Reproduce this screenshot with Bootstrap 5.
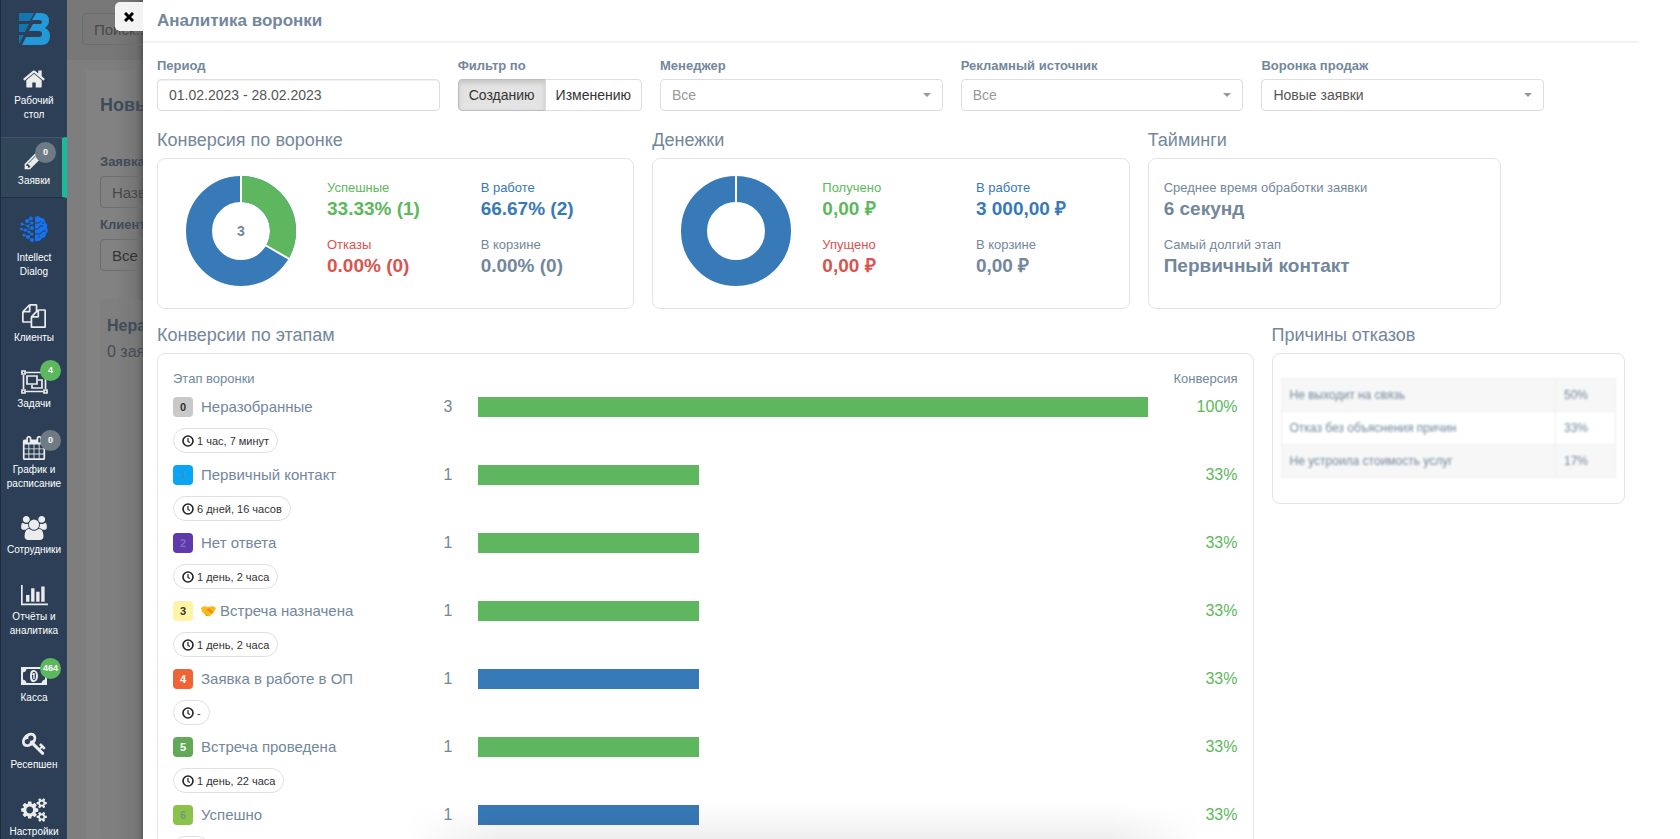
<!DOCTYPE html>
<html lang="ru">
<head>
<meta charset="utf-8">
<meta name="viewport" content="width=device-width, initial-scale=1">
<title>Аналитика воронки</title>
<link href="https://cdn.jsdelivr.net/npm/bootstrap@5.3.0/dist/css/bootstrap.min.css" rel="stylesheet">
<style>
:root{--ink:#73879c;--ok:#5cb85c;--work:#3879b7;--bad:#d9534f;--line:#e4e4e4}
body{font-family:"Liberation Sans",Arial,sans-serif;font-size:13px;line-height:18px;color:var(--ink);background:#fff}
.c-ok{color:var(--ok)}.c-work{color:var(--work)}.c-bad{color:var(--bad)}
/* sidebar */
.side{width:67px;background:#2c3f56;border-left:1px solid #1e2c3d;padding-top:57px}
.side-logo{left:16px;top:12px}
.side-item{display:block;color:#fff;text-decoration:none;text-align:center;font-size:10px;line-height:14px;padding:10px 0;margin-bottom:5px}
.side-item:nth-child(n+8){margin-bottom:6px}
.side-item .ico{height:24px;margin-bottom:3px;display:flex;align-items:center;justify-content:center}
.side-item .ico-tall{height:35px;padding-bottom:4px}
.side-item svg{fill:#ececec}
.side-item.current{background:#32465a;border-right:5px solid #1abb9c;border-top:1px solid #42566c;border-bottom:1px solid #213040;padding:9px 0}
.side-item.current .ico,.side-item.current .lbl{margin-right:-5px}
.count{position:absolute;left:39px;top:0;width:21px;height:21px;border-radius:50%;background:#707a84;color:#fff;font-size:9px;font-weight:bold;line-height:21px}
.count.on{background:var(--ok)}
.count.low,.current .count{top:4px}
.current .count{left:34px}
/* dimmed page under the panel */
.under{width:76px;background:linear-gradient(90deg,#7e7e7e 60%,#737373 90%,#636363);color:#3f4b59;white-space:nowrap}
.under-top{height:60px;padding:13px 0 0 15px;background:linear-gradient(90deg,#787878 60%,#6e6e6e 90%,#5e5e5e)}
.under-body{margin:10px 0 0 19px;padding:24px 0 0 14px;background:linear-gradient(90deg,#828282 50%,#767676 85%,#636363);flex:1}
.ghost{width:120px;height:32px;border:1px solid #6d6d6d;border-radius:4px;background:transparent;color:#333;font-size:15px;padding:0 11px}
.ghost::placeholder{color:#484848}
.ghost-title{font-size:18px;line-height:22px;margin-bottom:37px}
.ghost-label{font-weight:bold;display:block;margin-bottom:5px}
.ghost-card{margin-top:28px;padding:14px 7px;background:#7c7c7c55;border-radius:4px;font-size:16px;line-height:26px;flex:1}
/* panel */
.panel{background:#fff;box-shadow:0 0 4px #0004;min-width:0}
.panel-head{height:43px;border-bottom:2px solid #f3f3f3;padding:0 14px;margin-right:41px}
.panel-head h1{font-size:17px;line-height:41px;font-weight:bold;margin:0}
.btn-shut{position:absolute;right:100%;top:2px;width:28px;height:29px;border:0;border-radius:5px 0 0 5px;background:#f3f3f3;padding:0}
.panel-body{padding:14px 55px 0 14px}
.filters{display:grid;grid-template-columns:9fr auto 9fr 9fr 9fr 2fr;gap:18px}
.filters label,.filters .cap{display:block;font-weight:bold;line-height:18px;margin-bottom:4px}
.ctl{width:100%;height:32px;border:1px solid #ddd;border-radius:4px;font-size:14px;color:#555;background:#fff;padding:0 11px;box-shadow:inset 0 1px 1px #0001}
select.ctl{appearance:none;box-shadow:none;background:#fff url("data:image/svg+xml,%3Csvg xmlns='http://www.w3.org/2000/svg' viewBox='0 0 8 4'%3E%3Cpath fill='%23999' d='M0 0h8L4 4z'/%3E%3C/svg%3E") no-repeat right 11px center/8px 4px}
.ctl.dim{color:#999}
.seg .btn{height:32px;border:1px solid #ddd;font-size:14px;line-height:18px;padding:0 10px;color:#333;border-radius:4px}
.seg .btn:first-child{background:#e3e3e3;border-color:#bdbdbd;box-shadow:inset 0 3px 5px #0002}
.grid{--bs-gutter-x:18px}
.first{margin-top:17px}.second{margin-top:14px}
.sect{font-size:18px;line-height:24px;font-weight:normal;margin:0 0 6px}
.box{border:1px solid var(--line);border-radius:8px;background:#fff;height:151px}
.val{font-size:19px;line-height:24px;font-weight:bold;margin-bottom:15px}
.box-stats{padding:16px 27px}
.facts{padding:20px 15px}
.pair{display:grid;grid-template-columns:11fr 9fr;padding:4px 0 0 30px;white-space:nowrap}
.stages{height:auto;padding:16px 15px 0;margin-bottom:20px}
.stages-head{margin-bottom:9px}
.stage{display:grid;grid-template-columns:245px 60px 1fr 90px;height:68px;grid-template-rows:20px 1fr;row-gap:11px;font-size:16px;line-height:20px}
.stage-name{font-size:15px}
.num{display:inline-block;width:20px;height:20px;border-radius:4px;text-align:center;font-size:11px;font-weight:bold;line-height:20px;margin-right:8px}
.bar{height:20px}
.bar.ok{background:#5eb75e}.bar.work{background:var(--work)}
.pill{display:inline-flex;align-items:center;height:25px;border:1px solid #e0e0e0;border-radius:13px;padding:0 8px;font-size:11px;color:#333;justify-self:start;gap:3px}
.reasons{padding:24px 8px}
.reasons table{--bs-table-color:var(--ink);--bs-table-striped-color:var(--ink);--bs-table-striped-bg:#f7f7f7;filter:blur(1px);color:var(--ink);border-color:#eee;font-size:12px;line-height:16px;margin:0}
.reasons td{padding:8px}
.reasons td:last-child{width:60px}
.foot-shade{position:absolute;left:17%;right:31%;bottom:0;height:36px;background:linear-gradient(#0000,#0001);mask-image:linear-gradient(90deg,#0000,#000 12%,#000 88%,#0000);-webkit-mask-image:linear-gradient(90deg,#0000,#000 12%,#000 88%,#0000);pointer-events:none}
</style>
</head>
<body class="vh-100 overflow-hidden">
<div class="d-flex h-100 overflow-hidden">
  <nav class="side flex-shrink-0 position-relative overflow-hidden" aria-label="Главное меню">
    <a href="#" class="side-logo position-absolute" aria-label="Главная"><svg class="d-block" width="34" height="34" viewBox="0 0 34 34"><path fill="#1474ae" d="M2 1h15l-4 8H2zM2 12h10l-4 8H2zM2 23h5l-5 9z"/><path fill="#2399d8" d="M19 1h5q8 0 8 8 0 4-4 7 5 2 5 8 0 9-9 9H5l4-8h13q3 0 3-3t-3-3H12l4-7h6q3 0 3-2t-3-2h-7z"/></svg></a>
    <a href="#" class="side-item"><span class="ico"><svg width="24" height="24" viewBox="0 0 1792 1792"><path d="M1472 992v480q0 26-19 45t-45 19h-384v-384h-256v384h-384q-26 0-45-19t-19-45v-480q0-1 .5-3t.5-3l575-474 575 474q1 2 1 6zm223-69l-62 74q-8 9-21 11h-3q-13 0-21-7l-692-577-692 577q-12 8-24 7-13-2-21-11l-62-74q-8-10-7-23.5t11-21.5l719-599q32-26 76-26t76 26l244 204v-195q0-14 9-23t23-9h192q14 0 23 9t9 23v408l219 182q10 8 11 21.5t-7 23.5z"/></svg></span><span class="lbl d-block">Рабочий<br>стол</span></a>
    <a href="#" class="side-item current position-relative"><span class="ico"><svg width="23" height="23" viewBox="0 0 1792 1792"><path d="M491 1536l91-91-235-235-91 91v107h128v128h107zm523-928q0-22-22-22-10 0-17 7l-542 542q-7 7-7 17 0 22 22 22 10 0 17-7l542-542q7-7 7-17zm-54-192l416 416-832 832h-416v-416zm683 96q0 53-37 90l-166 166-416-416 166-165q36-38 90-38 53 0 91 38l235 234q37 39 37 91z"/></svg></span><span class="lbl d-block">Заявки</span><span class="count">0</span></a>
    <a href="#" class="side-item"><span class="ico ico-tall"><svg width="30" height="28" viewBox="0 0 30 28" style="fill:#1573f0"><path d="M16 2q4-2 6 1 4 0 4 4 3 2 2 6 2 3-1 6 0 4-4 4-2 4-7 3z"/><path fill="none" stroke="#2c3f56" stroke-width="1" d="M16 8h4l2-2M16 14h3l2-3h3M16 19h5l3-3h3M20 23v-2M24 7v2"/><circle cx="12" cy="3.500" r="2"/><circle cx="8" cy="6" r="2"/><circle cx="13" cy="8" r="1.500"/><circle cx="3" cy="9" r="1.500"/><circle cx="9" cy="11" r="1.500"/><circle cx="2.500" cy="14" r="1.500"/><circle cx="6" cy="15" r="1.500"/><circle cx="13" cy="13" r="2"/><circle cx="10" cy="17" r="1.500"/><circle cx="5" cy="20" r="1.500"/><circle cx="13" cy="19" r="1.500"/><circle cx="9" cy="22" r="2"/><circle cx="13" cy="25" r="2"/><path stroke="#1573f0" stroke-width=".8" d="M12 3 8 6l5 2-4 3-6-2M6 15l7-2M2 14l8 3 3 2-4 3-4-2M9 22l4 3" fill="none"/></svg></span><span class="lbl d-block">Intellect<br>Dialog</span></a>
    <a href="#" class="side-item"><span class="ico"><svg width="24" height="24" viewBox="0 0 1792 1792"><path d="M1696 384q40 0 68 28t28 68v1216q0 40-28 68t-68 28h-960q-40 0-68-28t-28-68v-288h-544q-40 0-68-28t-28-68v-672q0-40 20-88t48-76l408-408q28-28 76-48t88-20h416q40 0 68 28t28 68v328q68-40 128-40h416zm-544 213l-299 299h299v-299zm-640-384l-299 299h299v-299zm196 647l316-316v-416h-384v416q0 40-28 68t-68 28h-416v640h512v-256q0-40 20-88t48-76zm956 804v-1152h-384v416q0 40-28 68t-68 28h-416v640h896z"/></svg></span><span class="lbl d-block">Клиенты</span></a>
    <a href="#" class="side-item position-relative"><span class="ico"><svg width="27" height="24" viewBox="0 0 27 24"><g fill="none" stroke="#ececec" stroke-width="1.700"><path d="M5 2.500h17M5 21.500h17M2.500 5v14M24.500 5v14"/><path d="M1 1h3v3H1zM23 1h3v3h-3zM1 20h3v3H1zM23 20h3v3h-3z"/><path d="M6 6h10v8H6zM17 10h4v8H11v-3"/></g></svg></span><span class="lbl d-block">Задачи</span><span class="count on">4</span></a>
    <a href="#" class="side-item position-relative"><span class="ico"><svg width="24" height="24" viewBox="0 0 1792 1792"><path d="M192 1664h288v-288h-288v288zm352 0h320v-288h-320v288zm-352-352h288v-320h-288v320zm352 0h320v-320h-320v320zm-352-384h288v-288h-288v288zm736 736h320v-288h-320v288zm-384-736h320v-288h-320v288zm768 736h288v-288h-288v288zm-384-352h320v-320h-320v320zm-352-864v-288q0-13-9.500-22.500t-22.500-9.500h-64q-13 0-22.500 9.500t-9.500 22.500v288q0 13 9.500 22.500t22.500 9.500h64q13 0 22.500-9.500t9.500-22.500zm736 864h288v-320h-288v320zm-384-384h320v-288h-320v288zm384 0h288v-288h-288v288zm32-480v-288q0-13-9.500-22.500t-22.500-9.500h-64q-13 0-22.500 9.500t-9.500 22.500v288q0 13 9.500 22.500t22.500 9.500h64q13 0 22.500-9.500t9.500-22.500zm384-64v1280q0 52-38 90t-90 38h-1408q-52 0-90-38t-38-90v-1280q0-52 38-90t90-38h128v-96q0-66 47-113t113-47h64q66 0 113 47t47 113v96h384v-96q0-66 47-113t113-47h64q66 0 113 47t47 113v96h128q52 0 90 38t38 90z"/></svg></span><span class="lbl d-block">График и<br>расписание</span><span class="count low">0</span></a>
    <a href="#" class="side-item"><span class="ico"><svg width="26" height="24" viewBox="0 0 1920 1792"><path d="M593 896q-162 5-265 128h-134q-82 0-138-40.500t-56-118.500q0-353 124-353 6 0 43.500 21t97.500 42.500 119 21.500q67 0 133-23-5 37-5 66 0 139 81 256zm1071 637q0 120-73 189.500t-194 69.500h-874q-121 0-194-69.500t-73-189.500q0-53 3.500-103.500t14-109 26.500-108.500 43-97.500 62-81 85.500-53.500 111.500-20q10 0 43 21.500t73 48 107 48 135 21.500 135-21.500 107-48 73-48 43-21.500q61 0 111.500 20t85.500 53.500 62 81 43 97.500 26.500 108.500 14 109 3.500 103.500zm-1024-1277q0 106-75 181t-181 75-181-75-75-181 75-181 181-75 181 75 75 181zm704 384q0 159-112.500 271.500t-271.500 112.500-271.500-112.500-112.500-271.500 112.500-271.500 271.500-112.500 271.500 112.500 112.500 271.500zm576 225q0 78-56 118.500t-138 40.500h-134q-103-123-265-128 81-117 81-256 0-29-5-66 66 23 133 23 59 0 119-21.500t97.500-42.500 43.500-21q124 0 124 353zm-128-609q0 106-75 181t-181 75-181-75-75-181 75-181 181-75 181 75 75 181z"/></svg></span><span class="lbl d-block">Сотрудники</span></a>
    <a href="#" class="side-item"><span class="ico"><svg width="27" height="24" viewBox="0 0 2048 1792"><path d="M640 896v512h-256v-512h256zm384-512v1024h-256v-1024h256zm1024 1152v128h-2048v-1536h128v1408h1920zm-640-896v768h-256v-768h256zm384-384v1152h-256v-1152h256z"/></svg></span><span class="lbl d-block">Отчёты и<br>аналитика</span></a>
    <a href="#" class="side-item position-relative"><span class="ico"><svg width="26" height="18" viewBox="0 0 26 18"><path fill-rule="evenodd" d="M0 0h26v18H0zM5.500 2Q5 5 2 5.500v7Q5 13 5.500 16h15q.5-3 3.500-3.500v-7Q21 5 20.500 2z"/><path fill-rule="evenodd" d="M13 3q4 1 4 6t-4 6-4-6 4-6zm0 1.800Q11 5 11 9t2 4.200Q15 13 15 9t-2-4.200z"/><path d="M12.500 6h1.200v6h-1.400V8h-1V7z"/></svg></span><span class="lbl d-block">Касса</span><span class="count on low">464</span></a>
    <a href="#" class="side-item"><span class="ico"><svg width="25" height="25" viewBox="0 0 1792 1792"><path d="M832 512q0-80-56-136t-136-56-136 56-56 136q0 42 19 83-41-19-83-19-80 0-136 56t-56 136 56 136 136 56 136-56 56-136q0-42-19-83 41 19 83 19 80 0 136-56t56-136zm851 704q0 17-49 66t-66 49q-9 0-28.500-16t-36.500-33-38.500-40-24.500-26l-96 96 220 220q28 28 28 68 0 42-39 81t-81 39q-40 0-68-28l-671-671q-176 131-365 131-163 0-265.500-102.500t-102.500-265.500q0-160 95-313t248-248 313-95q163 0 265.500 102.500t102.500 265.500q0 189-131 365l355 355 96-96q-3-3-26-24.500t-40-38.500-33-36.500-16-28.500q0-17 49-66t66-49q13 0 23 10 6 6 46 44.500t82 79.500 86.500 86 73 78 28.500 41z"/></svg></span><span class="lbl d-block">Ресепшен</span></a>
    <a href="#" class="side-item"><span class="ico"><svg width="26" height="24" viewBox="0 0 1920 1792"><path d="M896 896q0-106-75-181t-181-75-181 75-75 181 75 181 181 75 181-75 75-181zm768 512q0-52-38-90t-90-38-90 38-38 90q0 53 37.500 90.500t90.500 37.500 90.500-37.500 37.500-90.500zm0-1024q0-52-38-90t-90-38-90 38-38 90q0 53 37.500 90.500t90.500 37.500 90.500-37.500 37.500-90.500zm-384 421v185q0 10-7 19.500t-16 10.500l-155 24q-11 35-32 76 34 48 90 115 7 11 7 20 0 12-7 19-23 30-82.500 89.500t-78.500 59.500q-11 0-21-7l-115-90q-37 19-77 31-11 108-23 155-7 24-30 24h-186q-11 0-20-7.500t-10-17.500l-23-153q-34-10-75-31l-118 89q-7 7-20 7-11 0-21-8-144-133-144-160 0-9 7-19 10-14 41-53t47-61q-23-44-35-82l-152-24q-10-1-17-9.500t-7-19.500v-185q0-10 7-19.500t16-10.500l155-24q11-35 32-76-34-48-90-115-7-11-7-20 0-12 7-20 22-30 82-89t79-59q11 0 21 7l115 90q34-18 77-32 11-108 23-154 7-24 30-24h186q11 0 20 7.500t10 17.500l23 153q34 10 75 31l118-89q8-7 20-7 11 0 21 8 144 133 144 160 0 8-7 19-12 16-42 54t-45 60q23 48 34 82l152 23q10 2 17 10.500t7 19.500zm640 533v140q0 16-149 31-12 27-30 52 51 113 51 138 0 4-4 7-122 71-124 71-8 0-46-47t-52-68q-20 2-30 2t-30-2q-14 21-52 68t-46 47q-2 0-124-71-4-3-4-7 0-25 51-138-18-25-30-52-149-15-149-31v-140q0-16 149-31 13-29 30-52-51-113-51-138 0-4 4-7 4-2 35-20t59-34 30-16q8 0 46 46.500t52 67.500q20-2 30-2t30 2q51-71 92-112l6-2q4 0 124 70 4 3 4 7 0 25-51 138 17 23 30 52 149 15 149 31zm0-1024v140q0 16-149 31-12 27-30 52 51 113 51 138 0 4-4 7-122 71-124 71-8 0-46-47t-52-68q-20 2-30 2t-30-2q-14 21-52 68t-46 47q-2 0-124-71-4-3-4-7 0-25 51-138-18-25-30-52-149-15-149-31v-140q0-16 149-31 13-29 30-52-51-113-51-138 0-4 4-7 4-2 35-20t59-34 30-16q8 0 46 46.500t52 67.500q20-2 30-2t30 2q51-71 92-112l6-2q4 0 124 70 4 3 4 7 0 25-51 138 17 23 30 52 149 15 149 31z"/></svg></span><span class="lbl d-block">Настройки</span></a>
  </nav>

  <div class="under flex-shrink-0 overflow-hidden d-flex flex-column">
    <div class="under-top"><input class="ghost" type="text" placeholder="Поиск..." aria-label="Поиск"></div>
    <div class="under-body d-flex flex-column">
      <h2 class="ghost-title fw-bold">Новые</h2>
      <label class="ghost-label" for="g1">Заявка</label>
      <input class="ghost mb-2" id="g1" type="text" placeholder="Название">
      <label class="ghost-label" for="g2">Клиент</label>
      <input class="ghost" id="g2" type="text" value="Все">
      <div class="ghost-card"><b>Неразобранные</b><br>0 заявок</div>
    </div>
  </div>

  <main class="panel flex-grow-1 position-relative">
    <button type="button" class="btn-shut" aria-label="Закрыть"><svg width="10" height="10" viewBox="0 0 10 10"><path d="M1 1l8 8M9 1L1 9" stroke="#000" stroke-width="3"/></svg></button>
    <header class="panel-head"><h1>Аналитика воронки</h1></header>
    <div class="panel-body">
      <form class="filters">
        <div><label for="period">Период</label><input class="ctl" id="period" type="text" value="01.02.2023 - 28.02.2023"></div>
        <div><span class="cap">Фильтр по</span><div class="btn-group seg" role="group" aria-label="Фильтр по"><button type="button" class="btn">Созданию</button><button type="button" class="btn">Изменению</button></div></div>
        <div><label for="manager">Менеджер</label><select class="ctl dim" id="manager"><option>Все</option></select></div>
        <div><label for="source">Рекламный источник</label><select class="ctl dim" id="source"><option>Все</option></select></div>
        <div><label for="funnel">Воронка продаж</label><select class="ctl" id="funnel"><option>Новые заявки</option></select></div>
      </form>

      <div class="row grid first">
        <section class="col-4">
          <h2 class="sect">Конверсия по воронке</h2>
          <div class="box box-stats d-flex align-items-start">
            <svg class="flex-shrink-0" width="112" height="112" viewBox="0 0 112 112" role="img" aria-label="Всего 3"><g fill="none" stroke-width="26"><circle cx="56" cy="56" r="42" stroke="#3879b7"/><path d="M56 14A42 42 0 0 1 92.370 77" stroke="#5eb75e"/></g><path d="M56 0v28M80 70l26 15" stroke="#fff" stroke-width="2"/><text x="56" y="61" text-anchor="middle" font-size="14" font-weight="bold" fill="#73879c">3</text></svg>
            <div class="pair flex-grow-1">
              <div class="c-ok">Успешные<div class="val">33.33% (1)</div></div>
              <div class="c-work">В работе<div class="val">66.67% (2)</div></div>
              <div class="c-bad">Отказы<div class="val">0.00% (0)</div></div>
              <div>В корзине<div class="val">0.00% (0)</div></div>
            </div>
          </div>
        </section>
        <section class="col-4">
          <h2 class="sect">Денежки</h2>
          <div class="box box-stats d-flex align-items-start">
            <svg class="flex-shrink-0" width="112" height="112" viewBox="0 0 112 112" role="img" aria-label="Денежки"><circle cx="56" cy="56" r="42" fill="none" stroke="#3879b7" stroke-width="26"/><path d="M56 0v28" stroke="#fff" stroke-width="2"/></svg>
            <div class="pair flex-grow-1">
              <div class="c-ok">Получено<div class="val">0,00 ₽</div></div>
              <div class="c-work">В работе<div class="val">3 000,00 ₽</div></div>
              <div class="c-bad">Упущено<div class="val">0,00 ₽</div></div>
              <div>В корзине<div class="val">0,00 ₽</div></div>
            </div>
          </div>
        </section>
        <section class="col-3">
          <h2 class="sect">Тайминги</h2>
          <div class="box facts">
            <div>Среднее время обработки заявки</div><div class="val">6 секунд</div>
            <div>Самый долгий этап</div><div class="val">Первичный контакт</div>
          </div>
        </section>
      </div>

      <div class="row grid second">
        <section class="col-9">
          <h2 class="sect">Конверсии по этапам</h2>
          <div class="box stages">
            <div class="stages-head d-flex justify-content-between"><span>Этап воронки</span><span>Конверсия</span></div>
            <div id="stages"></div>
          </div>
        </section>
        <section class="col-3">
          <h2 class="sect">Причины отказов</h2>
          <div class="box reasons">
            <table class="table table-bordered table-striped">
              <tbody>
                <tr><td>Не выходит на связь</td><td>50%</td></tr>
                <tr><td>Отказ без объяснения причин</td><td>33%</td></tr>
                <tr><td>Не устроила стоимость услуг</td><td>17%</td></tr>
              </tbody>
            </table>
          </div>
        </section>
      </div>
    </div>
    <div class="foot-shade"></div>
  </main>
</div>
<script src="https://cdn.jsdelivr.net/npm/bootstrap@5.3.0/dist/js/bootstrap.bundle.min.js"></script>
<script>
const shake='<svg width="15" height="12" viewBox="0 0 15 12" class="me-1"><path fill="#fbb91c" d="M0 3l3-2 4 1 5-1 3 2-2 4-4 4q-2 1-4-1L1 7z"/><path fill="#e88f12" d="M5 5l3-2 4 4-1 2-4-3zM3 8l4 3-2 0z"/></svg>';
const clock='<svg width="12" height="12" viewBox="0 0 12 12" fill="none" stroke="#222" stroke-width="1.600"><circle cx="6" cy="6" r="5"/><path d="M6 3v3.500l2 1" stroke-width="1.200"/></svg>';
const rows=[
 ['Неразобранные',3,100,'ok','1 час, 7 минут','#c9c9c9','#333'],
 ['Первичный контакт',1,33,'ok','6 дней, 16 часов','#0aa6f5','#3d8ec4'],
 ['Нет ответа',1,33,'ok','1 день, 2 часа','#6039ad','#7a70b5'],
 [shake+'Встреча назначена',1,33,'ok','1 день, 2 часа','#fff3a6','#333'],
 ['Заявка в работе в ОП',1,33,'work','-','#f06336','#fff'],
 ['Встреча проведена',1,33,'ok','1 день, 22 часа','#62a957','#fff'],
 ['Успешно',1,33,'work','-','#8bc34a','#73997c']];
document.getElementById('stages').innerHTML=rows.map((r,i)=>`<div class="stage">
<div class="stage-name text-nowrap d-flex align-items-center"><span class="num" style="background:${r[5]};color:${r[6]}">${i}</span>${r[0]}</div>
<div class="text-center">${r[1]}</div><div><div class="bar ${r[3]}" style="width:${r[2]}%"></div></div>
<div class="c-ok text-end">${r[2]}%</div><span class="pill">${clock}${r[4]}</span></div>`).join('');
</script>
</body>
</html>
